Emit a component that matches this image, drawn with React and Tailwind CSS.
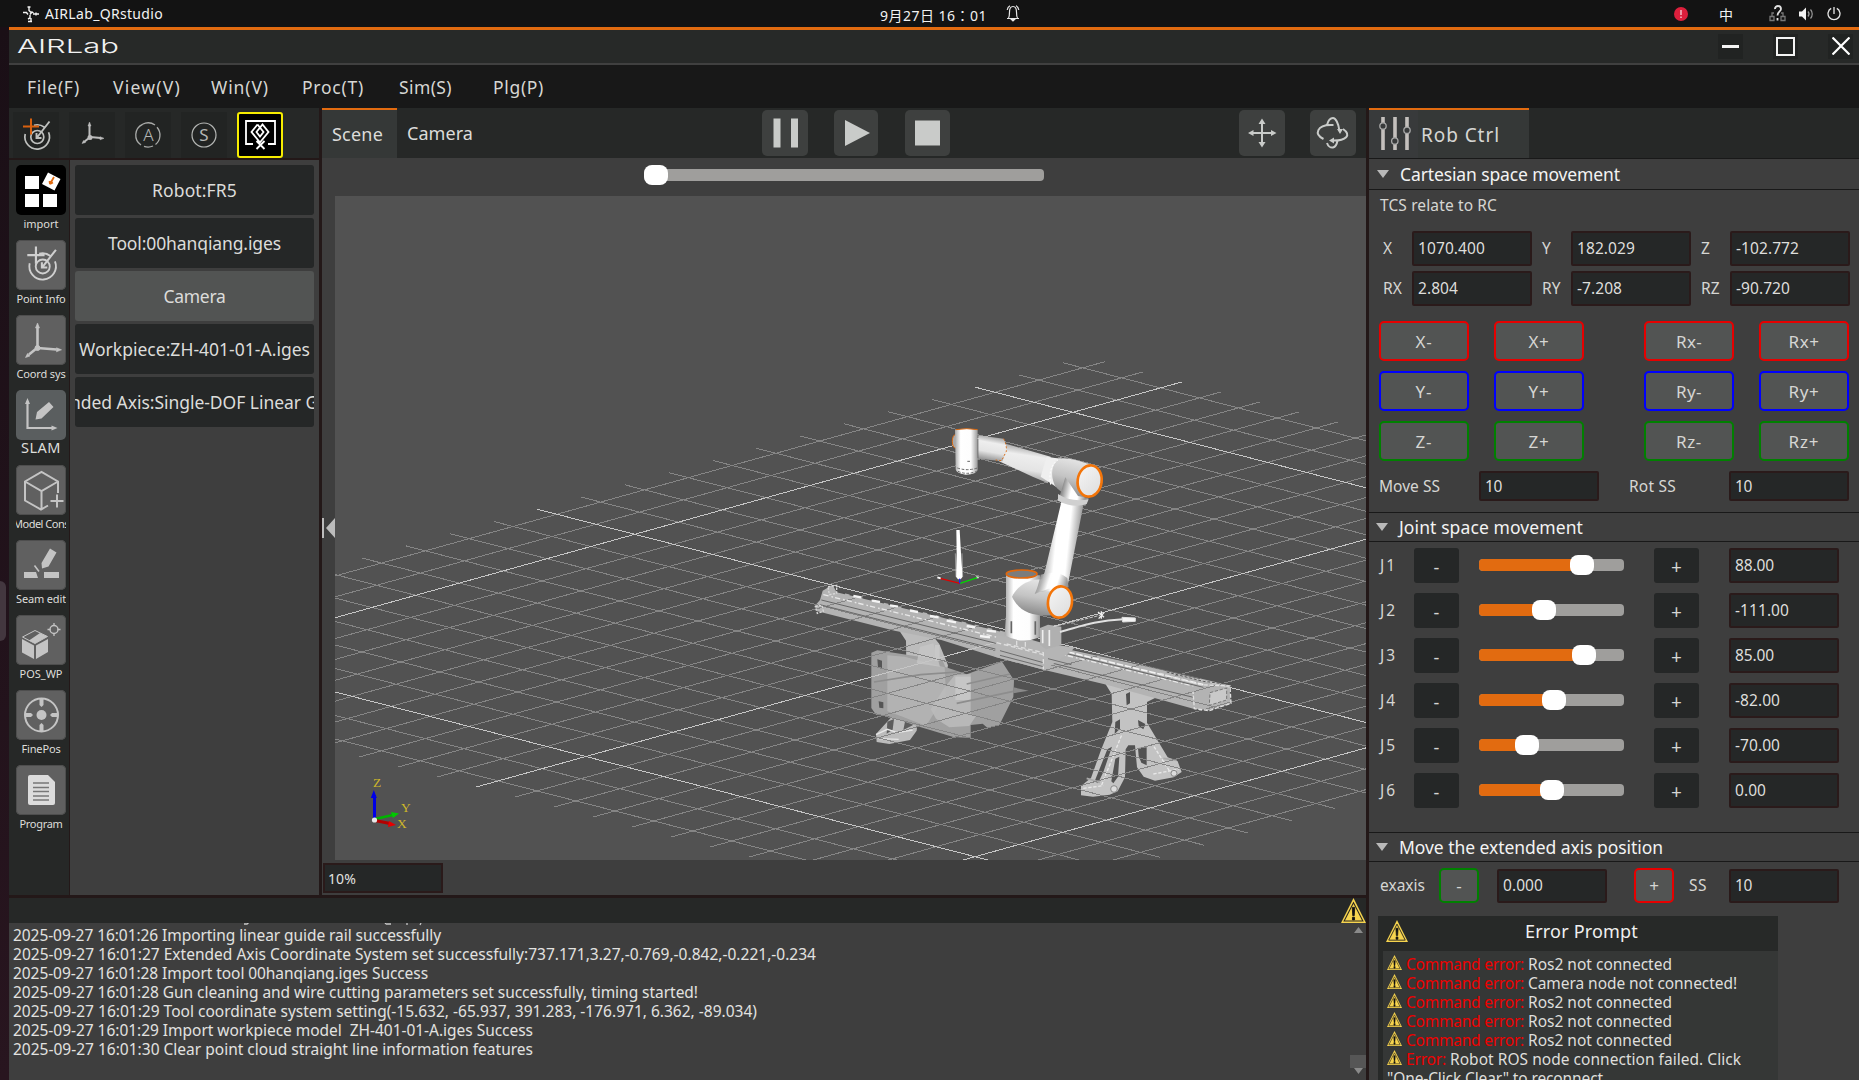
import { useLayoutEffect, useRef, useState } from "react";

// Text run whose tracking is tuned so that it occupies a given width.
function T({ w, className = "", children }) {
  const ref = useRef(null);
  const [ls, setLs] = useState(0);
  useLayoutEffect(() => {
    if (!w) return;
    const el = ref.current;
    const natural = el.getBoundingClientRect().width - ls * el.textContent.length;
    setLs((w - natural) / el.textContent.length);
  }, [w]);
  return (
    <span ref={ref} className={"inline-block shrink-0 whitespace-pre " + className} style={{ letterSpacing: ls + "px" }}>
      {children}
    </span>
  );
}

function TopBar() {
  return (
    <header className="flex h-[27px] shrink-0 items-center bg-[#131313] text-[#f2f2f2]">
      <svg className="ml-[23px] mt-px" width="16" height="17" viewBox="0 0 16 17" fill="none" stroke="#f2f2f2" strokeWidth="1.400">
        <path d="M0 6.500h3.500l1.500 2M6 1v3.500l2 2M4.500 1h3M10 8h6M13 6.500v3M7 8.500l2-2.500 1.500 1M7 9v3l-2 1M5 15.500h4M8 12v3.500" />
      </svg>
      <T w={118} className="ml-[6px] text-[14px]">AIRLab_QRstudio</T>
      <T w={107} className="ml-[717px] mt-[3px] text-[14px] leading-5">9月27日 16<span className="font-['Noto_Sans_CJK_TC']" lang="zh-TW">：</span>01</T>
      <svg className="ml-[19px]" width="14" height="17" viewBox="0 0 14 17" fill="none" stroke="#e8e8e8" strokeWidth="1.2">
        <path d="M1 13.500h12M2.500 13c1-1.500 1-3 1-6C3.500 3.500 5 1.500 7 1.500s3.500 2 3.500 5.500c0 3 0 4.500 1 6M1.200 5C1.500 3 2.500 1.500 4 .8M12.800 5C12.500 3 11.500 1.500 10 .8" />
        <path d="M5.500 14.500h3L7 16z" fill="#e8e8e8" />
      </svg>
      <svg className="ml-[654px]" width="14" height="14" viewBox="0 0 14 14">
        <circle cx="7" cy="7" r="7" fill="#dc1f3c" />
        <path d="M7 3v5M7 9.500v1.500" stroke="#f3b6c0" strokeWidth="1.600" />
      </svg>
      <span className="ml-[31px] mt-[2px] w-[14px] text-[14px] leading-5">中</span>
      <svg className="ml-[36px]" width="17" height="17" viewBox="0 0 17 17" fill="none" stroke="#777" strokeWidth="1.300">
        <path d="M1 11.500h4v4H1zM12 11.500h4v4h-4zM3 11V8h2M14 11V8h-2M6 3.500h-1" />
        <path d="M6 4c0-4 6-4 6 0 0 2.500-3.500 2.500-3.500 6.500M8.500 13v2.500" stroke="#e0e0e0" strokeWidth="1.800" />
      </svg>
      <svg className="ml-[13px]" width="15" height="14" viewBox="0 0 15 14" fill="none">
        <path d="M0 4.500h3L7 .5v13L3 9.500H0z" fill="#f2f2f2" />
        <path d="M9 4.500c1.300 1.500 1.300 3.500 0 5M11.500 2.500c2.300 2.500 2.300 6.500 0 9" stroke="#999" strokeWidth="1.200" />
      </svg>
      <svg className="ml-[13px]" width="14" height="14" viewBox="0 0 14 14" fill="none" stroke="#e8e8e8" strokeWidth="1.300">
        <path d="M7 0v7M4.200 1.400a6 6 0 1 0 5.600 0" />
      </svg>
    </header>
  );
}

function TitleBar() {
  return (
    <div className="flex h-[38px] shrink-0 items-center border-t-[3px] border-b-2 border-t-[#e26b10] border-b-[#404040] bg-[#272928]">
      <svg className="ml-[8px] -mt-[2px] overflow-visible" width="106" height="22" viewBox="0 0 106 22">
        <text x="0" y="18" textLength="102" lengthAdjust="spacingAndGlyphs" fill="#f2f2f2" fontFamily="Inter" fontWeight="300" fontSize="19">AIRLab</text>
      </svg>
      <div className="ml-auto mr-[6px] flex items-center gap-[30px] -mt-px">
        <div className="flex h-[25px] w-[25px] items-center justify-center bg-[#212322]">
          <div className="h-[3px] w-[17px] bg-[#f4f4f4]" />
        </div>
        <div className="flex h-[25px] w-[25px] items-center justify-center bg-[#212322]">
          <div className="h-[19px] w-[19px] border-2 border-[#f4f4f4]" />
        </div>
        <div className="flex h-[25px] w-[25px] items-center justify-center bg-[#212322]">
          <svg width="18" height="18" viewBox="0 0 18 18" stroke="#fff" strokeWidth="2.200"><path d="M.5.5l17 17M17.500.5l-17 17" /></svg>
        </div>
      </div>
    </div>
  );
}

const menus = [["File(F)", 53], ["View(V)", 68], ["Win(V)", 58], ["Proc(T)", 62], ["Sim(S)", 53], ["Plg(P)", 51]];

function MenuBar() {
  return (
    <nav className="flex h-[43px] shrink-0 items-center bg-[#181818] pl-[18px] text-[17.5px] text-[#d6d6d3]">
      {menus.map(([m, w], i) => (
        <T key={m} w={w} className={["mr-[33px]", "mr-[30px]", "mr-[33px]", "mr-[35px]", "mr-[41px]", ""][i] + " mt-[2px]"}>{m}</T>
      ))}
    </nav>
  );
}

function Target({ plus = "#cfcfcf", color = "#cfcfcf" }) {
  return (
    <g fill="none" stroke={color} strokeWidth="1.700">
      <path d="M12.200 22A12.300 12.300 0 1 0 35.600 20.200" />
      <path d="M21 13.200A12.300 12.300 0 0 1 31.500 15.300" />
      <circle cx="24.300" cy="25" r="6.500" />
      <path d="M36.500 9.500L24 25.500M23.500 21v5h5" strokeWidth="1.900" />
      <path d="M18 6.500v16M10 14.500h16" stroke={plus} strokeWidth="2" />
    </g>
  );
}

const toolIcons = [
  <Target plus="#d8600f" color="#bfc1bf" />,
  <g stroke="#bdbdbd" strokeWidth="2" fill="#bdbdbd">
    <path d="M20.500 25.500V13M21 25l11 1M20 26l-5 4" fill="none" />
    <path d="M20.500 10l1.500 4h-3zM35 26.300l-4 1.500v-3zM13 31.500l1.500-3 2 2z" strokeWidth=".5" />
    <circle cx="21" cy="25.500" r="1.500" />
  </g>,
  <g stroke="#a9aba9" fill="none" strokeWidth="1.300">
    <path d="M16 33a12 12 0 0 1 1.500-20.700 12 12 0 0 1 12.500.7M32 15.300a12 12 0 0 1-1.500 17.200M28 34a12 12 0 0 1-9 .3" />
    <text x="23.500" y="29" textAnchor="middle" fontSize="17" fontFamily="Noto Sans" fontWeight="300" fill="#b5b7b5" stroke="none">A</text>
  </g>,
  <g stroke="#b5b7b5" fill="none" strokeWidth="1.200">
    <circle cx="23" cy="23" r="12" />
    <text x="23" y="29" textAnchor="middle" fontSize="17" fontFamily="Noto Sans" fill="#b5b7b5" stroke="none">S</text>
  </g>,
  <g stroke="#fff" fill="none" strokeWidth="1.800">
    <path d="M16 32H9V9h29v23h-7" />
    <path d="M20.500 12.500l-6 7.500 9 11M20.500 12.500l6 7.500-3.500 4.500L19.500 20l6-7.500 6 7.500-9 11M19.500 29l8 8M27.500 29l-8 8" />
  </g>,
];

function ToolRow() {
  return (
    <div className="flex h-[50px] shrink-0 items-center gap-[10px] bg-[#262827] pl-[4px] pt-[3px]">
      {toolIcons.map((ic, i) => (
        <div key={i} className={i === 4 ? "box-border h-[46px] w-[46px] rounded-[3px] border-2 border-[#f6ec00] bg-black" : "h-[46px] w-[46px] bg-[#222423]"}>
          <svg className={i === 4 ? "-m-[2px]" : ""} width="46" height="46" viewBox="0 0 46 46">{ic}</svg>
        </div>
      ))}
    </div>
  );
}

const C = "#c4c4c4";
const sideItems = [
  ["import", 35, "text-[11px]",
    <g fill="#fff"><path d="M9 11h14v13H9zM9 29h14v13H9zM27 29h14v13H27zM32 7.500l12.500 6.500-6 11.500-12.500-6.500z" /><path d="M38 12l-4 7M34 19l-.5-3M34 19l3-1.500" stroke="#e26b10" strokeWidth="1.800" fill="none" /></g>],
  ["Point Info", 49, "text-[11px]", <g transform="translate(.5 -.5) scale(1.080)"><Target /></g>],
  ["Coord sys", 49, "text-[11px]",
    <g fill={C} stroke={C}><path d="M21.500 33V12M21.500 33l19 1.500M21 33l-8 6.500" strokeWidth="2.600" fill="none" /><circle cx="21.500" cy="33" r="2.500" /><path d="M21.500 8l2 5h-4zM45.500 34.800l-5 2v-4zM9.500 42.500l2-4 2.500 2.500z" strokeWidth=".6" /></g>],
  ["SLAM", 40, "text-[14.5px]",
    <g fill={C}><path d="M11.500 11v27H38" fill="none" stroke={C} strokeWidth="2.200" /><path d="M11.500 8l2.500 6H9zM41.500 38l-6 2.500v-5zM19.500 29.500l1.500-7.500 12-10 4.500 5-12 11.500z" /></g>],
  ["Model Cons", 56, "text-[11px]",
    <g fill="none" stroke={C} strokeWidth="2"><path d="M32 40.500l-7 4L9 35.500V16.500L25.500 7 42 16.500V28M9 16.500L25.500 26 42 16.500M25.500 26v18.500M41 29.500v13M34.500 36h13" /></g>],
  ["Seam edit", 50, "text-[11px]",
    <g fill={C}><path d="M8 32h12l2 6H8zM28 32h15v6H28zM34 8.500l6.500 4-8 14-6.500 2-.5-5.500z" /><path d="M18.500 25.500l4.500 6" stroke={C} strokeWidth="1.600" /></g>],
  ["POS_WP", 43, "text-[11px]",
    <g fill={C}><path d="M6 24l12 6.500V44L6 37.500zM20 30.500L32 24v13L20 44z" /><path d="M19 15.500L31.500 21.500 19 28.500 6.500 22z" fill="none" stroke={C} strokeWidth="1" /><path d="M24 18l7.500 3.500L19 28.500l-6-3z" /><circle cx="38" cy="14.500" r="4" fill="none" stroke={C} strokeWidth="1.400" /><path d="M38 8v3M38 18v3M31.500 14.500h3M41.500 14.500h3" stroke={C} strokeWidth="1.300" /></g>],
  ["FinePos", 39, "text-[11px]",
    <g fill={C}><circle cx="25.500" cy="25" r="16.500" fill="none" stroke={C} strokeWidth="2" /><circle cx="25.500" cy="25" r="5" /><path d="M23.500 8h4v7l-2 2-2-2zM23.500 42h4v-7l-2-2-2 2zM9 23v4h6l2-2-2-2zM42 23v4h-6l-2-2 2-2z" /></g>],
  ["Program", 43, "text-[11px]",
    <g><path d="M12 12q0-2 2-2h18l7 7v21q0 2-2 2H14q-2 0-2-2z" fill="#dcdcdc" /><path d="M17 18h16M17 22.500h16M17 26.500h16M17 31h16M17 35h16" stroke="#777" strokeWidth="1.400" /></g>],
];

function Sidebar() {
  return (
    <aside className="flex w-[61px] shrink-0 flex-col border-r border-[#231818] bg-[#262827] pl-[7px] pt-[5px]">
      {sideItems.map(([label, w, size, ic], i) => (
        <div key={label} className="flex h-[75px] w-[50px] shrink-0 flex-col items-center overflow-hidden">
          <div className={"h-[50px] w-[50px] shrink-0 rounded-[5px] " + (i === 0 ? "bg-black" : i === 3 ? "bg-[#5a5e5f]" : "bg-[#606060] shadow-[inset_0_0_0_1px_#4e4e4e]")}>
            <svg width="50" height="50" viewBox="0 0 50 50">{ic}</svg>
          </div>
          <T w={w} className={size + (i === 3 ? " leading-[14px]" : " leading-[18px]") + " text-[#dededb]"}>{label}</T>
        </div>
      ))}
    </aside>
  );
}

const objects = [["Robot:FR5", 85], ["Tool:00hanqiang.iges", 173], ["Camera", 62], ["Workpiece:ZH-401-01-A.iges", 231], ["Extended Axis:Single-DOF Linear Guide", 319]];

function ObjectPanel() {
  return (
    <section className="flex grow flex-col gap-[3px] bg-[#3e3e3e] px-[5px] pt-[5px]">
      {objects.map(([o, w], i) => (
        <div key={o} className={"flex h-[50px] w-[239px] items-center justify-center overflow-hidden rounded-[3px] text-[17.5px] text-[#dcdcda] " + (i === 2 ? "bg-[#525453]" : "bg-[#252727]")}>
          <T w={w} className="mt-px">{o}</T>
        </div>
      ))}
    </section>
  );
}

// Floor grid: lattice point (i, j) in view coordinates.
const pt = (i, j) => [634.7 + 38.93 * j + 43.82 * i, 534.3 + 10.02 * j - 12.2 * i];
const range = (a, b) => Array.from({ length: b - a + 1 }, (_, k) => a + k);

function GridLines() {
  const line = (p, q, bright, key) => (
    <line key={key} x1={p[0]} y1={p[1]} x2={q[0]} y2={q[1]} stroke={bright ? "#c6c6c6" : "#858585"} strokeWidth="1" />
  );
  return (
    <g shapeRendering="crispEdges">
      {range(-12, 12).filter((i) => i % 10).map((i) => line(pt(i, -2.5), pt(i, 22.5), false, "a" + i))}
      {range(-2, 22).filter((j) => j % 10).map((j) => line(pt(-12.5, j), pt(12.5, j), false, "b" + j))}
      {[-10, 0, 10].map((i) => line(pt(i, -2.5), pt(i, 22.5), true, "A" + i))}
      {[0, 10, 20].map((j) => line(pt(-12.5, j), pt(12.5, j), true, "B" + j))}
    </g>
  );
}

function Scene() {
  return (
    <svg width="1031" height="664" viewBox="335 196 1031 664" className="block bg-[#525252]">
      <defs>
        <linearGradient id="cyl" x1="0" x2="1" y1="0" y2="0">
          <stop offset="0" stopColor="#a8a8a8" /><stop offset=".25" stopColor="#fff" /><stop offset=".7" stopColor="#fdfdfd" /><stop offset="1" stopColor="#9a9a9a" />
        </linearGradient>
        <linearGradient id="arm" x1=".6" y1="0" x2=".4" y2="1">
          <stop offset="0" stopColor="#8f8f8f" /><stop offset=".3" stopColor="#eee" /><stop offset=".65" stopColor="#e4e4e4" /><stop offset="1" stopColor="#8a8a8a" />
        </linearGradient>
        <linearGradient id="up" x1="0" y1=".4" x2="1" y2=".6">
          <stop offset=".1" stopColor="#8f8f8f" /><stop offset=".4" stopColor="#fff" /><stop offset=".65" stopColor="#fff" /><stop offset=".92" stopColor="#8f8f8f" />
        </linearGradient>
        <linearGradient id="joint" x1=".6" y1="0" x2=".35" y2="1">
          <stop offset="0" stopColor="#e6e6e6" /><stop offset=".5" stopColor="#c4c4c4" /><stop offset="1" stopColor="#858585" />
        </linearGradient>
        <linearGradient id="cap" x1="0" y1="0" x2="1" y2="1"><stop offset="0" stopColor="#f6f6f6" /><stop offset="1" stopColor="#dcdcdc" /></linearGradient>
      </defs>

      <g transform="translate(800 400) scale(.33333)">
        {/* left stand */}
        <path d="M298 692l20 30 2 160-28 50-64 70 2 24 38 6 62-12 20-28 8-76 66-10 20-110-26-64-16-20z" fill="#bcbcbc" />
        <path d="M262 965l20-8-4 32-18 12zM318 950l26-8-6 34-28 14z" fill="#5d5d5d" />
        <path d="M228 1004l34-16 30 10 46-8M236 1016l60 2" stroke="#e6e6e6" strokeWidth="4" fill="none" />
        {/* workpiece */}
        <path d="M214 758l18-7 196 30 8 20 64 22 60-22 46-16 36 56-2 50-42 84-36 8-14-12-36 4v39l-52-3-102-31-96-32-34-4-14-20z" fill="#a0a0a0" />
        <path d="M262 766l52 4 120 32 4 80-60 96-70-28-46-16z" fill="#b8b8b8" opacity=".75" />
        <path d="M392 928l42-66 30-36 48-4v120l16 6-20 30-60 4-40-26z" fill="#bababa" opacity=".9" />
        <path d="M466 830h46v70h-46z" fill="#c9c9c9" opacity=".8" />
        <path d="M222 846l140-22 110-8M470 910l170-36M500 852l130-30" stroke="#8d8d8d" strokeWidth="5" fill="none" />
        <path d="M232 778l14 4v22l-12-2zM236 904l14 3v18l-12-2z" fill="#555" />
        <path d="M640 862l46 10-46 8z" fill="#8a8a8a" />
        <path d="M360 740l40-10 20 70-70-10z" fill="#c6c6c6" opacity=".8" />
        <path d="M405 735h14v48h-14z" fill="#c8c8c8" />
        {/* right stand */}
        <path fillRule="evenodd" fill="#c3c3c3" d="M915 850l20 32 2 84-34 84-30 84-30 24v28l36 4 50-6 24-10 22-42 2-84 8-12h20l6 66 20 28 34 12 56-10 24-16-12-32-30-12-62-104v-62l60-30z M978 882l12-6v34l-10 6z M946 966l14-8v28l-16 16z M922 1048l14-8-26 76-16 34-10-6z M946 1076l12-6-4 60-14 20-6-6z M1014 1044l26-2v54l-16-8-8-20z M1014 960l22 12-6 16-14-10z" />
        <path d="M850 1165l60-8M905 1155l60-150M1062 1040l46 72M1060 1122l76-14" stroke="#e8e8e8" strokeWidth="4" strokeDasharray="10 5" fill="none" />
        <path d="M860 1135l40 12M1090 1075l40 6" stroke="#aaa" strokeWidth="5" />
        <circle cx="942" cy="1167" r="10" fill="#ddd" stroke="#888" strokeWidth="3" /><circle cx="1122" cy="1120" r="9" fill="#ddd" stroke="#888" strokeWidth="3" />
        {/* beam */}
        <path d="M68 572l30-18 10 20 500 120 150 44 350 76 180 42 4 55-67 20-45-5-260-72-186-44-150-40-160-50-140-28-232-58-8-16 16-18z" fill="#b3b3b3" />
      </g>

      <GridLines />

      <g transform="translate(800 400) scale(.33333)">
        {/* rail details */}
        <path d="M70 584l530 130 140 38 440 106" stroke="#e8e8e8" strokeWidth="4" strokeDasharray="16 9 5 6" fill="none" />
        <path d="M64 600l540 134M60 614l600 152 520 126M740 746l470 116M760 732l440 104" stroke="#666" strokeWidth="3" fill="none" />
        <path d="M110 574l490 118" stroke="#4f4f4f" strokeWidth="5" strokeDasharray="26 14" fill="none" />
        <path d="M160 588l24 4M216 602l24 4M270 616l24 4M330 632l24 4M390 648l26 4M440 662l28 5M500 678l26 4M560 692l28 3M540 708l30 4" stroke="#f4f4f4" strokeWidth="7" />
        <path d="M780 750l430 104" stroke="#f2f2f2" strokeWidth="5" strokeDasharray="20 5" fill="none" />
        <path d="M84 560l26-4v24l-22 4zM46 620l20-4 4 18-18 6z" fill="none" stroke="#d8d8d8" strokeWidth="4" strokeDasharray="7 4" />
        <path d="M1080 820l120 34 90 4 3 52-66 22-44-6-4-52" fill="none" stroke="#e0e0e0" strokeWidth="4" strokeDasharray="12 5" />
        <path d="M1230 878l50-14v36l-52 16z" fill="#c9c9c9" stroke="#777" strokeWidth="3" strokeDasharray="10 5" />
        <path d="M1100 816l110 28 70 8" stroke="#555" strokeWidth="3" strokeDasharray="8 6" fill="none" />
        {/* carriage */}
        <path d="M590 706l150 26 84 10-10 12-80 56-150-40z" fill="#b5b5b5" />
        <path d="M600 752l130 36M600 766l130 34M744 776l70 18" stroke="#6c6c6c" strokeWidth="3" fill="none" />
        <path d="M620 732l110 26v50M590 728l140 36M650 722v24M676 726v24" stroke="#dedede" strokeWidth="4" fill="none" strokeDasharray="14 8" />
        <path d="M720 684l24-10 40 6v56l-46 12-18-14z" fill="#b0b0b0" />
        <path d="M748 690v48M728 690v40" stroke="#efefef" strokeWidth="5" />
        <path d="M780 696c60-16 100-34 190-38" stroke="#e0e0e0" strokeWidth="6" fill="none" />
        <path d="M966 652l40 2v10l-38 2z" fill="#f4f4f4" stroke="#ddd" strokeWidth="3" />
        <path d="M760 680l140-34" stroke="#ccc" strokeWidth="3" strokeDasharray="10 4" />
        <path d="M894 636l18 16M912 638l-16 18M904 634v22" stroke="#f0f0f0" strokeWidth="4" />
        {/* base column */}
        <path d="M618 526v120l-4 60q50 28 106 6V526z" fill="url(#cyl)" />
        <path d="M634 664v36M706 664v40" stroke="#666" strokeWidth="5" />
        <ellipse cx="665" cy="522" rx="46" ry="12" fill="#7c7c7c" stroke="#e2680c" strokeWidth="5" />
        {/* shoulder */}
        <path d="M636 590c20-40 60-60 120-50l30 16-28 90c-60 4-100-10-122-56z" fill="url(#joint)" />
        <path d="M784 306l66 10-48 246-30 10-60 4 22-60z" fill="url(#up)" />
        <path d="M722 524q50-16 80 10l4 28-60 4-42 16q10-20 18-58z" fill="url(#up)" opacity=".9" />
        <ellipse cx="780" cy="606" rx="36" ry="47" transform="rotate(8 780 606)" fill="url(#cap)" stroke="#f3750a" strokeWidth="8" />
        {/* elbow and forearm */}
        <path d="M612 130l140 40-8 80-46-20-104-48z" fill="url(#arm)" />
        <path d="M535 106l76 10q10 20 8 36l-12 32-72-8z" fill="url(#arm)" />
        <path d="M611 116q10 20 8 38l-14 28-18-2" stroke="#d96a14" strokeWidth="3" strokeDasharray="6 6" fill="none" />
        <path d="M740 170l40 6-12 84-46-30z" fill="#efefef" />
        <path d="M774 178c20-10 60 4 100 16l-20 98c-40 0-70-8-90-36-14-34-8-60 10-78z" fill="url(#joint)" />
        <path d="M796 232l38 56 32 6-10 24-78-26z" fill="url(#up)" />
        <path d="M774 282q40 26 92 16l-6 14q-40 14-86-10z" fill="#d0d0d0" />
        <path d="M752 254c-6-36 0-62 30-80" fill="none" stroke="#fff" strokeWidth="3" strokeDasharray="6 5" />
        <ellipse cx="869" cy="243" rx="36" ry="47" transform="rotate(8 869 243)" fill="url(#cap)" stroke="#f3750a" strokeWidth="8" />
        {/* wrist */}
        <ellipse cx="466" cy="124" rx="9" ry="20" fill="#aaa" stroke="#d96a14" strokeWidth="3" />
        <path d="M465 90q34-8 68 0v120q-2 12-36 14-30-4-30-16z" fill="url(#cyl)" />
        <path d="M467 89q34-6 66 0" stroke="#d96a14" strokeWidth="3" fill="none" />
        <path d="M472 204q30 10 60 0M474 214q26 12 56 0M502 184h12" stroke="#666" strokeWidth="3" strokeDasharray="8 5" fill="none" />
        {/* tool */}
        <path d="M469 390h10l4 70 5 70-6 8h-8l-6-8 2-70z" fill="#fff" />
        <path d="M466 460l2 70M486 460l2 70" stroke="#bbb" strokeWidth="2" />
        <path d="M480 550l-60-15" stroke="#e00000" strokeWidth="4" /><path d="M412 532l10 3M528 532h8" stroke="#fff" strokeWidth="5" />
        <path d="M480 550l52-17" stroke="#00d800" strokeWidth="4" /><path d="M479 550v-14" stroke="#2020ff" strokeWidth="4" />
      </g>

      {/* orientation triad */}
      <g>
        <path d="M374.500 820v-25" stroke="#0000e6" strokeWidth="3" /><path d="M373.800 790l3 8h-6z" fill="#0000e6" />
        <path d="M375 819l18-4" stroke="#00b400" strokeWidth="2.600" /><path d="M399 813.500l-8-1.500 2 6z" fill="#00c800" />
        <path d="M375 820.500l15 3" stroke="#b40000" strokeWidth="3" /><path d="M396 825l-7-4-1 6z" fill="#e60000" />
        <circle cx="374.500" cy="820" r="2.600" fill="#e8e8e8" />
        <g fill="#cdb62a" fontFamily="Liberation Serif" fontSize="13.500">
          <text x="373" y="787">Z</text><text x="401" y="812">Y</text><text x="397" y="828">X</text>
        </g>
      </g>
    </svg>
  );
}

const G = "#c9cbc9";
function IconBtn({ className, children }) {
  return (
    <div className={"h-[46px] shrink-0 rounded-[5px] bg-[#3e403f] " + className}>
      <svg width="46" height="46" viewBox="0 0 46 46" fill={G} stroke={G}>{children}</svg>
    </div>
  );
}

function Center() {
  return (
    <main className="flex w-[1044px] shrink-0 flex-col bg-[#3e3e3e]">
      <div className="flex h-[50px] shrink-0 bg-[#262827] text-[18px] text-[#dcdcda]">
        <div className="flex w-[75px] items-center border-t-2 border-[#e26b10] bg-[#353837] pl-[10px]"><T w={51} className="mt-px">Scene</T></div>
        <T w={66} className="ml-[10px] mt-[12px]">Camera</T>
        <div className="ml-auto flex pr-[10px] pt-[2px]">
          <IconBtn className="w-[46px]"><path d="M11.500 8.500h7v29h-7zM29 8.500h7v29h-7z" stroke="none" /></IconBtn>
          <IconBtn className="ml-[26px] w-[44px]"><path d="M11 10l25 13-25 13z" stroke="none" /></IconBtn>
          <IconBtn className="ml-[27px] w-[45px]"><path d="M10 10.500h25v25H10z" stroke="none" /></IconBtn>
          <IconBtn className="ml-[289px] w-[46px]">
            <path d="M23 12v23M12 23h22" strokeWidth="2" fill="none" /><path d="M23 8.500l3.500 5.500h-7zM23 37.500l3.500-5.500h-7zM9 23l5.500-3v6zM37.500 23L32 20v6z" stroke="none" />
          </IconBtn>
          <IconBtn className="ml-[25px] w-[46px]">
            <path d="M17 15c1-4 3.500-7 6-7s5.500 5 6.500 13M13.500 29c-10-5-6-14 7-14h3M17 33c1 3 3.500 5 6 4.500 2.500-.5 4-4 4.500-7M33 19c9 6 3 12-11 11.500" strokeWidth="2" fill="none" />
            <path d="M30 24l-3-5h6zM19 30.500l5-3v6z" stroke="none" />
          </IconBtn>
        </div>
      </div>
      <div className="flex h-[38px] shrink-0 items-center justify-center pb-[4px]">
        <div className="flex h-[12px] w-[400px] items-center rounded-[4px] bg-[#9f9e9c]"><div className="h-[20px] w-[24px] rounded-[8px] bg-white" /></div>
      </div>
      <div className="flex h-[664px] shrink-0">
        <div className="w-[13px] pt-[322px]">
          <svg width="13" height="20" viewBox="0 0 13 20" fill="#bcbcbc"><path d="M0 0h2v20H0zM13 0v20L4 10z" /></svg>
        </div>
        <Scene />
      </div>
      <div className="ml-px mt-[3px] flex h-[30px] w-[120px] items-center border-2 border-[#2a1a1a] bg-[#252727] pl-[3px] pt-px text-[14px] text-[#e2e2e0]"><T w={28}>10%</T></div>
    </main>
  );
}

function Warn({ size, className = "" }) {
  return (
    <svg className={"shrink-0 " + className} width={size} height={size} viewBox="0 0 24 24">
      <path d="M12 0l12 24H0z" fill="#f6d44e" /><path d="M12 4.500L21 22H3z" fill="none" stroke="#2b2720" strokeWidth="1" />
      <path d="M10.800 9h2.400l-.5 8h-1.400zM11 18.500h2v2.500h-2z" fill="#111" stroke="#111" strokeWidth=".8" />
    </svg>
  );
}

const logs = [
  ["2025-09-27 16:01:26 Importing linear guide rail successfully", 428],
  ["2025-09-27 16:01:27 Extended Axis Coordinate System set successfully:737.171,3.27,-0.769,-0.842,-0.221,-0.234", 803],
  ["2025-09-27 16:01:28 Import tool 00hanqiang.iges Success", 415],
  ["2025-09-27 16:01:28 Gun cleaning and wire cutting parameters set successfully, timing started!", 685],
  ["2025-09-27 16:01:29 Tool coordinate system setting(-15.632, -65.937, 391.283, -176.971, 6.362, -89.034)", 744],
  ["2025-09-27 16:01:29 Import workpiece model  ZH-401-01-A.iges Success", 520],
  ["2025-09-27 16:01:30 Clear point cloud straight line information features", 520],
];

function LogPanel() {
  return (
    <section className="flex h-[185px] shrink-0 flex-col border-t-[3px] border-[#231818] bg-[#3e3e3e]">
      <div className="flex h-[25px] shrink-0 justify-end bg-[#262827]"><Warn size={25} /></div>
      <div className="flex grow">
        <div className="flex flex-col pl-[4px] text-[15.5px] leading-[19px] text-[#e2e2e0]">
          {/* descenders of the row scrolled out above */}
          <svg className="block" width="430" height="3" viewBox="0 0 430 3" fill="none" stroke="#c8c8c8" strokeWidth="1.300">
            <path d="M231 1h3l1.500-1M373 1h5M372 0l1 1M394 0v2M408 0l-1 2" />
          </svg>
          {logs.map(([l, w]) => <div key={l} className="h-[19px]"><T w={w}>{l}</T></div>)}
        </div>
        <div className="ml-auto flex w-[16px] flex-col items-center">
          <svg className="mt-[4px]" width="9" height="6" viewBox="0 0 9 6"><path d="M4.500 0L9 6H0z" fill="#8a8a8a" /></svg>
          <div className="mt-auto flex h-[25px] w-[16px] flex-col items-center">
            <div className="h-[13px] w-[16px] bg-[#565656]" />
            <svg width="9" height="6" viewBox="0 0 9 6"><path d="M4.500 6L9 0H0z" fill="#8a8a8a" /></svg>
          </div>
        </div>
      </div>
    </section>
  );
}

function Header({ title, w, className }) {
  return (
    <div className={"flex shrink-0 items-center border-y border-[#191919] text-[17.5px] text-[#f3f3f3] " + className}>
      <svg width="12" height="8" viewBox="0 0 12 8"><path d="M0 0h12L6 8z" fill="#b9b9b9" /></svg>
      <T w={w} className="ml-[11px] leading-6">{title}</T>
    </div>
  );
}

function Input({ children, w, className }) {
  return <div className={"flex shrink-0 items-center rounded-[2px] border-2 border-[#2a1a1a] bg-[#252727] pl-[4px] text-[15.5px] text-[#dededb] " + className}><T w={w}>{children}</T></div>;
}

const pose = [
  [["X", "1070.400", 67], ["Y", "182.029", 58], ["Z", "-102.772", 63]],
  [["RX", "2.804", 40], ["RY", "-7.208", 45], ["RZ", "-90.720", 54]],
];
const jogs = [
  [["X-", "X+", "Rx-", "Rx+"], "border-[#e60000]"],
  [["Y-", "Y+", "Ry-", "Ry+"], "border-[#0000ff]"],
  [["Z-", "Z+", "Rz-", "Rz+"], "border-[#008000]"],
];
const jogWidth = [17, 21, 26, 31];
const joints = [["J1", 103, "88.00", 39], ["J2", 65, "-111.00", 54], ["J3", 105, "85.00", 39], ["J4", 75, "-82.00", 45], ["J5", 48, "-70.00", 45], ["J6", 73, "0.00", 31]];
const errors = [
  ["Command error:", 118, "Ros2 not connected", 144],
  ["Command error:", 118, "Camera node not connected!", 209],
  ["Command error:", 118, "Ros2 not connected", 144],
  ["Command error:", 118, "Ros2 not connected", 144],
  ["Command error:", 118, "Ros2 not connected", 144],
  ["Error:", 40, "Robot ROS node connection failed. Click", 291],
];

function RightPanel() {
  return (
    <aside className="flex w-[490px] shrink-0 flex-col overflow-hidden bg-[#3e3e3e] text-[15.5px] text-[#d6d6d3]">
      <div className="h-[50px] shrink-0 bg-[#262827]">
        <div className="flex h-[50px] w-[160px] items-center border-t-2 border-[#e26b10] bg-[#353837]">
          <div className="h-[48px] w-[49px] shrink-0 bg-[#383a3b]">
            <svg width="49" height="48" viewBox="0 0 49 48" fill="#383a3b">
              <path d="M14 7v33M26 7v33M38 7v33" stroke="#c4c0bd" strokeWidth="3.600" />
              <g stroke="#a8a8a8" strokeWidth="1.300"><circle cx="14" cy="16" r="3.200" /><circle cx="25.800" cy="31" r="3.200" /><circle cx="38" cy="20.300" r="3.200" /></g>
            </svg>
          </div>
          <T w={79} className="ml-[3px] mt-[2px] text-[19px]">Rob Ctrl</T>
        </div>
      </div>
      <Header title="Cartesian space movement" w={220} className="h-[32px] pl-[8px]" />
      <T w={117} className="ml-[11px] mt-[3px] self-start leading-6">TCS relate to RC</T>
      <div className="mt-[14px] flex flex-col gap-[5px] pl-[14px]">
        {pose.map((row, i) => (
          <div key={i} className="flex h-[35px] items-center">
            {row.map(([l, v, w]) => (
              <div key={l} className="flex w-[159px] shrink-0 items-center">
                <span className="w-[29px]">{l}</span>
                <Input w={w} className="h-[35px] w-[120px]">{v}</Input>
              </div>
            ))}
          </div>
        ))}
      </div>
      <div className="mt-[15px] flex flex-col gap-[10px] pl-[10px]">
        {jogs.map(([row, color]) => (
          <div key={color} className="flex">
            {row.map((b, i) => (
              <div key={b} className={"flex h-[40px] w-[90px] items-center justify-center rounded-[5px] border-2 bg-[#525453] pt-px text-[17px] " + color + (i === 2 ? " ml-[60px]" : i ? " ml-[25px]" : "")}><T w={jogWidth[i]}>{b}</T></div>
            ))}
          </div>
        ))}
      </div>
      <div className="mt-[10px] flex h-[30px] items-center pl-[10px]">
        <div className="w-[100px] pt-px"><T w={61}>Move SS</T></div>
        <Input w={17} className="h-[30px] w-[120px] pt-px">10</Input>
        <div className="ml-[30px] w-[100px] pt-px"><T w={47}>Rot SS</T></div>
        <Input w={17} className="h-[30px] w-[120px] pt-px">10</Input>
      </div>
      <Header title="Joint space movement" w={184} className="mt-[11px] h-[30px] pl-[7px]" />
      <div className="mt-[6px] flex flex-col gap-[10px] pl-[11px]">
        {joints.map(([j, pos, v, w]) => (
          <div key={j} className="flex h-[35px] items-center">
            <T w={17} className="mr-[17px]">{j}</T>
            <div className="flex h-[35px] w-[45px] items-center justify-center rounded-[3px] bg-[#252727] pt-[3px] text-[18px]">-</div>
            <div className="-mt-px ml-[20px] flex h-[12px] w-[145px] items-center rounded-[4px] bg-[#9f9e9c]">
              <div className="h-[12px] shrink-0 rounded-l-[4px] bg-[#e26b10]" style={{ width: pos }} />
              <div className="-ml-[12px] h-[20px] w-[24px] shrink-0 rounded-[8px] bg-white" />
            </div>
            <div className="ml-[30px] flex h-[35px] w-[45px] items-center justify-center rounded-[3px] bg-[#252727] pt-[4px] text-[19px]">+</div>
            <Input w={w} className="ml-[30px] h-[35px] w-[110px]">{v}</Input>
          </div>
        ))}
      </div>
      <Header title="Move the extended axis position" w={264} className="mt-[24px] h-[30px] pl-[7px]" />
      <div className="mt-[6px] flex h-[35px] items-center pl-[11px]">
        <T w={45} className="mr-[14px] mt-px">exaxis</T>
        <div className="flex h-[35px] w-[40px] items-center justify-center rounded-[5px] border-2 border-[#008000] bg-[#525453] text-[17px]">-</div>
        <Input w={40} className="ml-[18px] mt-px h-[34px] w-[110px]">0.000</Input>
        <div className="ml-[27px] flex h-[35px] w-[40px] items-center justify-center rounded-[5px] border-2 border-[#e60000] bg-[#525453] text-[17px]">+</div>
        <T w={18} className="ml-[15px] mr-[22px]">SS</T>
        <Input w={17} className="mt-px h-[34px] w-[110px]">10</Input>
      </div>
      <div className="ml-[9px] mt-[13px] flex h-[164px] w-[400px] shrink-0 flex-col overflow-hidden bg-[#272928]">
        <div className="flex h-[35px] shrink-0 items-center pl-[8px]">
          <Warn size={22} className="-mt-[5px]" />
          <T w={113} className="-mt-[4px] ml-[117px] text-[18px] text-[#f0f0f0]">Error Prompt</T>
        </div>
        <div className="ml-[5px] grow bg-[#353736] pl-[4px] pt-[4px] text-[15.5px] leading-[19px] text-[#dededb]">
          {errors.map(([a, wa, b, wb], i) => (
            <div key={i} className="flex h-[19px]">
              <Warn size={15} />
              <T w={wa} className="ml-[4px] text-[#f00000]">{a}</T>
              <T w={wb} className="ml-[4px]">{b}</T>
            </div>
          ))}
          <T w={220}>"One-Click Clear" to reconnect.</T>
        </div>
      </div>
    </aside>
  );
}

export default function App() {
  return (
    <div className="flex h-[1080px] w-[1859px] flex-col overflow-hidden bg-[#1a0f16] font-['Noto_Sans','Noto_Sans_CJK_SC',sans-serif]">
      <TopBar />
      <div className="flex grow">
        <div className="w-[9px] shrink-0 bg-gradient-to-b from-[#1a0f16] to-[#28151f] pt-[554px]">
          <div className="h-[60px] w-[6px] rounded-r-[6px] bg-[#43373f]" />
        </div>
        <div className="flex grow flex-col">
          <TitleBar />
          <MenuBar />
          <div className="flex grow">
            <div className="flex w-[1357px] shrink-0 flex-col">
              <div className="flex h-[787px] shrink-0">
                <div className="flex w-[310px] shrink-0 flex-col">
                  <ToolRow />
                  <div className="flex grow border-t-2 border-[#231818]">
                    <Sidebar />
                    <ObjectPanel />
                  </div>
                </div>
                <div className="w-[3px] shrink-0 bg-[#231818]" />
                <Center />
              </div>
              <LogPanel />
            </div>
            <div className="w-[3px] shrink-0 bg-[#231818]" />
            <RightPanel />
          </div>
        </div>
      </div>
    </div>
  );
}
